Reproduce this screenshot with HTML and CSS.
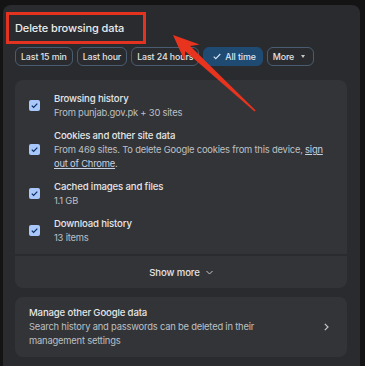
FILE: index.html
```html
<!DOCTYPE html>
<html lang="en">
<head>
    <meta charset="UTF-8">
    <meta name="viewport" content="width=device-width, initial-scale=1.0">
    <title>Delete browsing data</title>
    <link rel="stylesheet" href="styles.css">
</head>
<body>
    <div class="dialog">
        <h1 class="dialog-title">Delete browsing data</h1>

        <!-- Time range chips -->
        <div class="chips">
            <button class="chip">Last 15 min</button>
            <button class="chip">Last hour</button>
            <button class="chip">Last 24 hours</button>
            <button class="chip selected">
                <svg class="chip-check" width="8" height="7" viewBox="0 0 8 7"><path d="M0.7 3.6 L2.8 5.7 L7.3 1" fill="none" stroke="#d6e3f7" stroke-width="1.1"/></svg>
                All time
            </button>
            <button class="chip more">More <span class="caret"></span></button>
        </div>

        <!-- Data types -->
        <div class="card-group">
            <div class="card items">
                <label class="item">
                    <svg class="checkbox" width="11" height="11" viewBox="0 0 11 11"><rect width="11" height="11" rx="2" fill="#a8c7fa"/><path d="M2.8 5.6 L4.6 7.4 L8.3 3.6" fill="none" stroke="#0b2e63" stroke-width="1.2"/></svg>
                    <span class="item-text">
                        <span class="item-title">Browsing history</span>
                        <span class="item-sub">From punjab.gov.pk + 30 sites</span>
                    </span>
                </label>
                <label class="item">
                    <svg class="checkbox" width="11" height="11" viewBox="0 0 11 11"><rect width="11" height="11" rx="2" fill="#a8c7fa"/><path d="M2.8 5.6 L4.6 7.4 L8.3 3.6" fill="none" stroke="#0b2e63" stroke-width="1.2"/></svg>
                    <span class="item-text">
                        <span class="item-title">Cookies and other site data</span>
                        <span class="item-sub">From 469 sites. To delete Google cookies from this device, <a href="#" class="link">sign out of Chrome</a>.</span>
                    </span>
                </label>
                <label class="item">
                    <svg class="checkbox" width="11" height="11" viewBox="0 0 11 11"><rect width="11" height="11" rx="2" fill="#a8c7fa"/><path d="M2.8 5.6 L4.6 7.4 L8.3 3.6" fill="none" stroke="#0b2e63" stroke-width="1.2"/></svg>
                    <span class="item-text">
                        <span class="item-title">Cached images and files</span>
                        <span class="item-sub">1.1 GB</span>
                    </span>
                </label>
                <label class="item">
                    <svg class="checkbox" width="11" height="11" viewBox="0 0 11 11"><rect width="11" height="11" rx="2" fill="#a8c7fa"/><path d="M2.8 5.6 L4.6 7.4 L8.3 3.6" fill="none" stroke="#0b2e63" stroke-width="1.2"/></svg>
                    <span class="item-text">
                        <span class="item-title">Download history</span>
                        <span class="item-sub">13 items</span>
                    </span>
                </label>
            </div>
            <div class="card show-more">
                Show more
                <svg width="7" height="5" viewBox="0 0 7 5"><path d="M0.5 1 L3.5 4 L6.5 1" fill="none" stroke="#c4c7c5" stroke-width="1"/></svg>
            </div>
        </div>

        <!-- Other Google data -->
        <div class="card manage">
            <div class="manage-text">
                <div class="item-title">Manage other Google data</div>
                <div class="item-sub">Search history and passwords can be deleted in their management settings</div>
            </div>
            <svg class="chevron" width="5" height="8" viewBox="0 0 5 8"><path d="M0.8 0.8 L4 4 L0.8 7.2" fill="none" stroke="#c4c7c5" stroke-width="1.2"/></svg>
        </div>
    </div>

    <!-- Screenshot annotation -->
    <div class="annot-box"></div>
    <svg class="annot-arrow" width="365" height="366" viewBox="0 0 365 366">
        <polygon points="173,35 199.6,44.6 190.1,46 255.7,110.4 254.6,111.6 185.3,51.2 184.6,60.8" fill="#e8331f"/>
    </svg>
</body>
</html>
```

FILE: styles.css
```css
/* General Styles */
body {
    margin: 0;
    padding: 0;
    height: 366px;
    overflow: hidden;
    position: relative;
    background: #141414;
    font-family: Inter, "Liberation Sans", sans-serif;
    color: #e3e3e3;
}

.dialog {
    margin: 5px 0 0 3px;
    width: 357px;
    min-height: 361px;
    box-sizing: border-box;
    padding: 15px 13px 0 12px;
    background: #2a2b2f;
    border-radius: 8px 8px 0 0;
}

.dialog-title {
    margin: 0;
    font-size: 11px;
    font-weight: 500;
    letter-spacing: -0.1px;
    line-height: 16px;
    color: #ececec;
}

/* Chips */
.chips {
    display: flex;
    gap: 4px;
    margin-top: 11px;
}

.chip {
    display: flex;
    align-items: center;
    gap: 4px;
    height: 19px;
    margin: 0;
    padding: 0 5px;
    border: 1px solid #4a5d70;
    border-radius: 6px;
    background: transparent;
    color: #e3e3e3;
    font-family: inherit;
    font-size: 8.8px;
    font-weight: 500;
    letter-spacing: -0.1px;
    white-space: nowrap;
}

.chip.selected {
    padding: 0 6px 0 9px;
    background: #1f4a72;
    border-color: #1f4a72;
    color: #dde8f7;
}

.chip.more {
    padding: 0 8px 0 5px;
}

.caret {
    width: 0;
    height: 0;
    margin-left: 3px;
    border-left: 2.5px solid transparent;
    border-right: 2.5px solid transparent;
    border-top: 3px solid #c4c7c5;
}

/* Cards */
.card-group {
    display: flex;
    flex-direction: column;
    gap: 2px;
    margin-top: 14px;
}

.card {
    background: #333438;
}

.items {
    display: flex;
    flex-direction: column;
    gap: 9.5px;
    padding: 12px 14px 10px;
    border-radius: 8px 8px 0 0;
}

.item {
    display: flex;
    align-items: center;
    gap: 14px;
}

.checkbox {
    flex-shrink: 0;
}

.item-text {
    display: flex;
    flex-direction: column;
}

.item-title {
    font-size: 9.6px;
    font-weight: 500;
    letter-spacing: -0.15px;
    line-height: 14px;
    color: #e6e6e6;
}

.item-sub {
    font-size: 9.4px;
    letter-spacing: -0.2px;
    line-height: 13.5px;
    color: #bcc0c4;
}

.link {
    color: #c6d2e2;
    text-decoration: underline;
}

.show-more {
    display: flex;
    align-items: center;
    justify-content: center;
    gap: 6px;
    height: 32px;
    border-radius: 0 0 8px 8px;
    font-size: 9.6px;
    font-weight: 500;
    letter-spacing: -0.1px;
    color: #e3e3e3;
}

.manage {
    display: flex;
    align-items: center;
    justify-content: space-between;
    margin-top: 9px;
    padding: 9px 18px 9px 14px;
    border-radius: 8px;
}

.manage-text {
    max-width: 262px;
}

.manage .item-sub {
    line-height: 14px;
}

/* Annotation */
.annot-box {
    position: absolute;
    left: 6px;
    top: 12px;
    width: 134px;
    height: 26px;
    border: 3px solid #e3321f;
}

.annot-arrow {
    position: absolute;
    left: 0;
    top: 0;
    pointer-events: none;
}
```
